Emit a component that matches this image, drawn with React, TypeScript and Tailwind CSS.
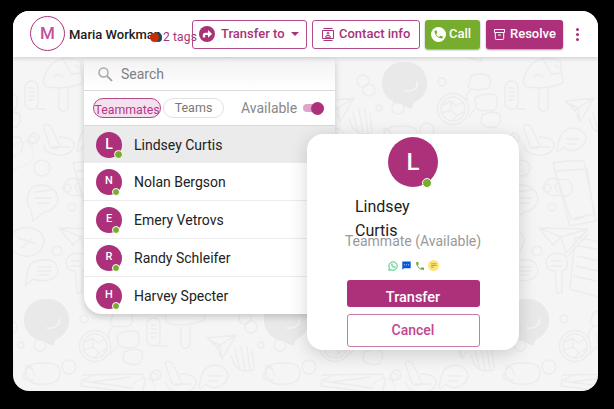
import React from "react";

const teammates = ["Lindsey Curtis", "Nolan Bergson", "Emery Vetrovs", "Randy Schleifer", "Harvey Specter"];

const tileOrigins = [
  [-193, 320], [47, 320], [287, 320], [527, 320],
  [-75, 83], [165, 83], [405, 83],
  [-193, -154], [47, -154], [287, -154], [527, -154],
];

function Doodles() {
  return (
    <svg className="absolute inset-0 h-full w-full" viewBox="13 57 585 334" fill="none" stroke="#ececec" strokeWidth="1.4" strokeLinejoin="round" strokeLinecap="round">
      <defs>
        <g id="doodles">
          <path d="M0-21a21 21 0 0 1 10 40q-3 2-3 7q-7-2-11-5A21 21 0 0 1 0-21z" fill="#e9e9e9" stroke="none" />
          <path d="M12-1q1 10-12 9" stroke="#f5f5f5" />
          <circle cx="48" cy="26" r="15.500" /><circle cx="48" cy="26" r="12" />
          <path d="M38 22l8-4 5 5 7-4M37 30l9-3 6 6 6-4M46 18l0 9M52 33l-4 4" />
          <circle cx="37" cy="-1" r="4" /><circle cx="22" cy="47" r="7" />
          <path d="M66-7q8-4 18 0q4 12-4 13q-12 2-17-2zM70 15q10-6 21-3q3 12-2 15q-14 3-18-3zM77 32q10-5 18-1q2 10-4 13q-9 2-15-4zM66 7q-6 5-4 10M70 27q-5 3-6 7" />
          <rect x="100" y="-2" width="13" height="28" rx="6" />
          <path d="M104 5h5M104 9h5M104 13h5M104 17h5M112 26h8" />
          <path d="M118-3q6-20 22-22l15 2 3 23q-22 8-38 3zM138-24l8 15 11-1M129-6l4-3 5 3M134 7v18q4 7 9 0v-20M150-18l4 3" />
          <path d="M160 18l29-3-14 24-5-12zM189 15l-19 12M175 39l-2-14M164 21l9 4" />
          <path d="M188 45l-4-9M193 49l-5-19M198 50l-4-23M203 50l-3-23M207 48l-2-17M187 44q7 10 20 6" />
          <circle cx="204" cy="7" r="6" /><circle cx="214" cy="25" r="3" /><circle cx="233" cy="25" r="6" />
          <path d="M-22 53q3-11 18-10q17-1 17 10q-1 12-16 11q-15 2-19-11zM-21 60q-5-4 0-8v-7q8 3 8 10M-19 60h5" />
          <path d="M35 55l60-1M35 59l-1 7 56 7M37 61l48 7M45 55l-8 5M95 54l3 7-2 9M45 62l38-5" />
          <circle cx="107" cy="57" r="4" />
          <path d="M118 43q6-4 9 3l8 17q-5 5-10 0zM134 54q16 0 15 10q-3 9-17 8q-13-2-13-9M128 64h16" />
          <path d="M157 50q10-9 20-2q9 8-2 17q-8 6-17-1q-3 5-6 4q1-10 5-18zM162 56h12M162 61h9" />
          <path d="M-13-58q15-5 21 1q8 13-6 17q-9 2-16-1l-8 7q3-12 3-17q1-5 6-7zM-9-53H4M-9-49H4M-9-45H2" />
          <path d="M19-60q6-10 19-5q6 14-3 16v22h-5l-2-22q-9 0-9-11zM24-59h10M24-54h10" />
          <path d="M48-83l35 7-7 54-33-9zM52-74l23 4M50-64l22 5M49-54l22 5M47-44l22 5" />
          <path d="M148 80q18-3 31-2l12 60-26 5zM150 88l32-2 7 45-23 5zM139 103q4-11 14-6q15-3 14 9q-1 10-14 6q-12 3-14-9zM153 99q-5 4 0 10M170 137l9-3" />
          <path d="M103 112q2-10 14-10q13 1 16 13q-1 12-14 14l-11 9q-1-6-2-11q-5-5-3-15zM110 109l16-2M110 115h16M113 120h11" />
          <path d="M134 145l49 1-22 24-5-16-8 8zM134 145l22 9M183 146l-27 8M183 151l-20 22" />
          <path d="M90 148q10-7 24 0q10 9 0 21q-12 9-25 0q-8-12 1-21zM93 155l18 6M97 165l9-9" />
          <circle cx="117" cy="85" r="8" /><circle cx="109" cy="55" r="5" /><circle cx="142" cy="105" r="4" /><circle cx="147" cy="124" r="4" /><circle cx="132" cy="168" r="5" />
          <circle cx="-42" cy="-2" r="6" />
          <path d="M90 61q12-6 17 3q4 14-7 18l-12 5q-8-17 2-26z" opacity=".45" />
        </g>
      </defs>
      {tileOrigins.map(([x, y]) => <use key={`${x},${y}`} href="#doodles" x={x} y={y} />)}
    </svg>
  );
}

function Header() {
  return (
    <header className="relative z-10 flex h-[46px] shrink-0 items-center bg-white pl-[17px] shadow-[0_1px_5px_rgba(0,0,0,.18)]">
      <div className="mb-[1px] flex h-[35px] w-[35px] shrink-0 items-center justify-center rounded-full border-[1.5px] border-[#a93279] text-[17px] font-medium text-[#c252a0]">M</div>
      <span className="ml-1 mt-[2px] w-[92px] shrink-0 whitespace-nowrap text-[13px] font-medium text-[#202020]">Maria Workman</span>
      <span className="relative -ml-[11px] mt-[6px] flex w-[13px] shrink-0">
        <i className="z-10 h-[9px] w-[9px] rounded-full bg-[#c92d0a]" />
        <i className="-ml-[5px] h-[9px] w-[8px] rounded-full bg-[#164c5b]" />
      </span>
      <span className="mt-[5px] w-[29px] shrink-0 whitespace-nowrap text-[12px] tracking-[.15px] text-[#a93279]">2 tags</span>
      <button className="flex h-[29px] w-[115px] shrink-0 items-center rounded-[3px] border border-[#b44b8b] pl-[6px] text-[13px] font-medium text-[#a93279]">
        <svg className="mr-[6px] h-4 w-4 shrink-0" viewBox="0 0 16 16"><circle cx="8" cy="8" r="8" fill="#a93279" /><path d="M3.800 11.500V9.200Q3.800 6.700 6.500 6.700H9V4l4 4-4 3.800V9H6.200v2.500z" fill="#fff" /></svg>
        <span className="whitespace-nowrap">Transfer to</span>
        <i className="ml-[6px] border-x-[4px] border-t-[4px] border-x-transparent border-t-[#a93279]" />
      </button>
      <button className="ml-[5px] flex h-[29px] w-[108px] shrink-0 items-center rounded-[3px] border border-[#b44b8b] pl-[9px] text-[13px] font-medium text-[#a93279]">
        <svg className="mr-[5px] h-[13px] w-3 shrink-0" viewBox="0 0 12 13" fill="none" stroke="#a93279"><path d="M1.500.5h9M1.500 12.500h9M.5 2.500h11v8H.5z" /><circle cx="6" cy="5.200" r="1" /><path d="M3.500 9.300q0-2 2.500-2t2.500 2z" /></svg>
        <span className="whitespace-nowrap">Contact info</span>
      </button>
      <button className="ml-[5px] flex h-[29px] w-[55px] shrink-0 items-center rounded-[3px] bg-[#76ad2e] pl-[6px] text-[13px] font-medium text-white shadow-[0_1px_2px_rgba(0,0,0,.4)]">
        <svg className="mr-[3px] h-[15px] w-[15px] shrink-0" viewBox="0 0 24 24"><circle cx="12" cy="12" r="12" fill="#fff" /><path transform="translate(3.400 3.400) scale(.72)" d="M6.620 10.790a15.150 15.150 0 0 0 6.590 6.590l2.200-2.200a1 1 0 0 1 1.020-.24c1.120.37 2.330.57 3.570.57a1 1 0 0 1 1 1V20a1 1 0 0 1-1 1A17 17 0 0 1 3 4a1 1 0 0 1 1-1h3.500a1 1 0 0 1 1 1c0 1.250.2 2.450.57 3.570a1 1 0 0 1-.25 1.020z" fill="#76ad2e" /></svg>
        Call
      </button>
      <button className="ml-[6px] flex h-[29px] w-[77px] shrink-0 items-center rounded-[3px] bg-[#ad307a] pl-[8px] text-[13px] font-medium text-white shadow-[0_1px_2px_rgba(0,0,0,.4)]">
        <svg className="mr-[5px] h-[11px] w-[11px] shrink-0" viewBox="0 0 11 11" fill="none" stroke="#fff"><path d="M.5.500h10v3H.5zM1.300 3.500v6q0 1 1 1h6.400q1 0 1-1v-6M4 6h3" /></svg>
        Resolve
      </button>
      <span className="ml-[13px] flex w-[3px] flex-col gap-[2px]">
        {[0, 1, 2].map((i) => <i key={i} className="h-[3px] w-[3px] rounded-full bg-[#a93279]" />)}
      </span>
    </header>
  );
}

function TransferMenu() {
  return (
    <section className="absolute left-[71px] top-[47px] flex h-[256px] w-[251px] flex-col overflow-hidden rounded-bl-[18px] bg-white shadow-[0_3px_7px_rgba(0,0,0,.18)]">
      <div className="flex h-8 shrink-0 items-center bg-gradient-to-b from-[#f2f2f2] to-white pl-[14px]">
        <svg className="h-[15px] w-[15px]" viewBox="0 0 15 15" fill="none" stroke="#aaa" strokeWidth="1.500"><circle cx="5.500" cy="5.500" r="4.500" /><path d="M9 9l5 5" strokeWidth="1.900" /></svg>
        <span className="ml-2 mt-px text-[14px] text-[#808080]">Search</span>
      </div>
      <div className="flex h-[36px] shrink-0 items-center border-y border-[#dadada] pl-[9px]">
        <span className="flex h-5 w-[68px] items-center justify-center whitespace-nowrap rounded-full border border-[#b14b88] bg-[#f5e1ee] pt-1 text-[12.300px] text-[#b13886]">Teammates</span>
        <span className="ml-[2px] flex h-5 w-[61px] items-center justify-center rounded-full border border-[#e2e2e2] text-[12.500px] text-[#777]">Teams</span>
        <span className="ml-[17px] w-[57px] text-[14px] text-[#888]">Available</span>
        <span className="ml-[5px] flex h-2 w-[21px] items-center justify-end rounded-full bg-[#dfa4c9]"><i className="h-[13px] w-[13px] shrink-0 rounded-full bg-[#ad307a]" /></span>
      </div>
      {teammates.map((name, i) => (
        <div key={name} className={`flex min-h-0 flex-1 items-center pl-3 ${i === 0 ? "bg-[#ebebeb]" : i > 1 ? "border-t border-[#ececec]" : ""}`}>
          <span className={`relative flex h-[26px] w-[26px] items-center justify-center rounded-full bg-[#ad307a] font-medium text-white ${i === 0 ? "text-[14px]" : "text-[11px]"}`}>
            {name[0]}
            <i className={`absolute -bottom-px rounded-full border border-white bg-[#76ad2e] ${i === 0 ? "-right-px h-[9px] w-[9px]" : "right-[2px] h-2 w-2"}`} />
          </span>
          <span className="ml-3 mt-[2px] text-[14px] text-[#222]">{name}</span>
        </div>
      ))}
    </section>
  );
}

function ConfirmDialog() {
  return (
    <section className="absolute left-[294px] top-[123px] z-10 flex h-[216px] w-[212px] flex-col items-center rounded-[16px] bg-white pt-[3px] shadow-[0_4px_18px_rgba(0,0,0,.17)]">
      <div className="relative flex h-[50px] w-[50px] shrink-0 items-center justify-center rounded-full bg-[#ad307a] text-[24px] font-medium text-white">L
        <i className="absolute -bottom-[1px] right-[6px] h-[10px] w-[10px] rounded-full border border-white bg-[#76ad2e]" />
      </div>
      <h2 className="mt-2 h-12 w-[116px] text-[16px] leading-6 text-[#222]">Lindsey<br />Curtis</h2>
      <p className="relative -mt-[13px] h-[26px] whitespace-nowrap text-[14px] leading-[22px] text-[#999]">Teammate (Available)</p>
      <div className="mt-[4px] flex h-[11px] w-[51px] shrink-0 items-center">
        <svg className="h-[10px] w-[10px]" viewBox="0 0 10 10" fill="none" stroke="#42cb78"><path d="M.8 9.300l.6-2.200A4.200 4.200 0 1 1 3 8.700z" /><path d="M3.300 3.200q0 3 3.500 3.700l.5-1-1.100-.6-.5.5Q4.500 5.200 4.300 4.300l.4-.5-.4-1z" strokeWidth=".7" /></svg>
        <svg className="ml-1 h-[9px] w-[9px]" viewBox="0 0 9 9"><path d="M.3.500h8.400v6.800H2L.3 8.800z" fill="#0759dc" /><path d="M2 3.800h1M4 3.800h1M6 3.800h1" stroke="#b3d2ff" /></svg>
        <svg className="ml-[5px] h-[8px] w-[8px]" viewBox="3 3 18 18"><path d="M6.620 10.790a15.150 15.150 0 0 0 6.590 6.590l2.200-2.200a1 1 0 0 1 1.020-.24c1.120.37 2.330.57 3.570.57a1 1 0 0 1 1 1V20a1 1 0 0 1-1 1A17 17 0 0 1 3 4a1 1 0 0 1 1-1h3.500a1 1 0 0 1 1 1c0 1.250.2 2.450.57 3.570a1 1 0 0 1-.25 1.020z" fill="#76ad2e" /></svg>
        <svg className="ml-[4px] h-[11px] w-[11px]" viewBox="0 0 11 11"><circle cx="5.500" cy="5.500" r="5.500" fill="#ffe477" /><path d="M3 3.800h5.500M3 5.500h5.500M3 7.200h3" stroke="#ad9237" strokeWidth=".8" /></svg>
      </div>
      <button className="mt-[9px] flex h-[27px] w-[133px] shrink-0 items-end justify-center rounded-[3px] bg-[#ad307a] text-[14.500px] font-medium leading-[18px] text-white">Transfer</button>
      <button className="mt-[7px] flex h-[33px] w-[133px] shrink-0 items-center justify-center rounded-[3px] border border-[#c77ba8] text-[14px] font-medium text-[#c2478d]">Cancel</button>
    </section>
  );
}

export default function App() {
  return (
    <div className="h-[409px] w-[614px] overflow-hidden bg-black pl-[13px] pt-[11px] font-['Roboto',sans-serif]">
      <main className="relative flex h-[380px] w-[585px] flex-col overflow-hidden rounded-[16px] bg-[#f5f5f5]">
        <Header />
        <div className="relative flex-1"><Doodles /></div>
        <TransferMenu />
        <ConfirmDialog />
      </main>
    </div>
  );
}
